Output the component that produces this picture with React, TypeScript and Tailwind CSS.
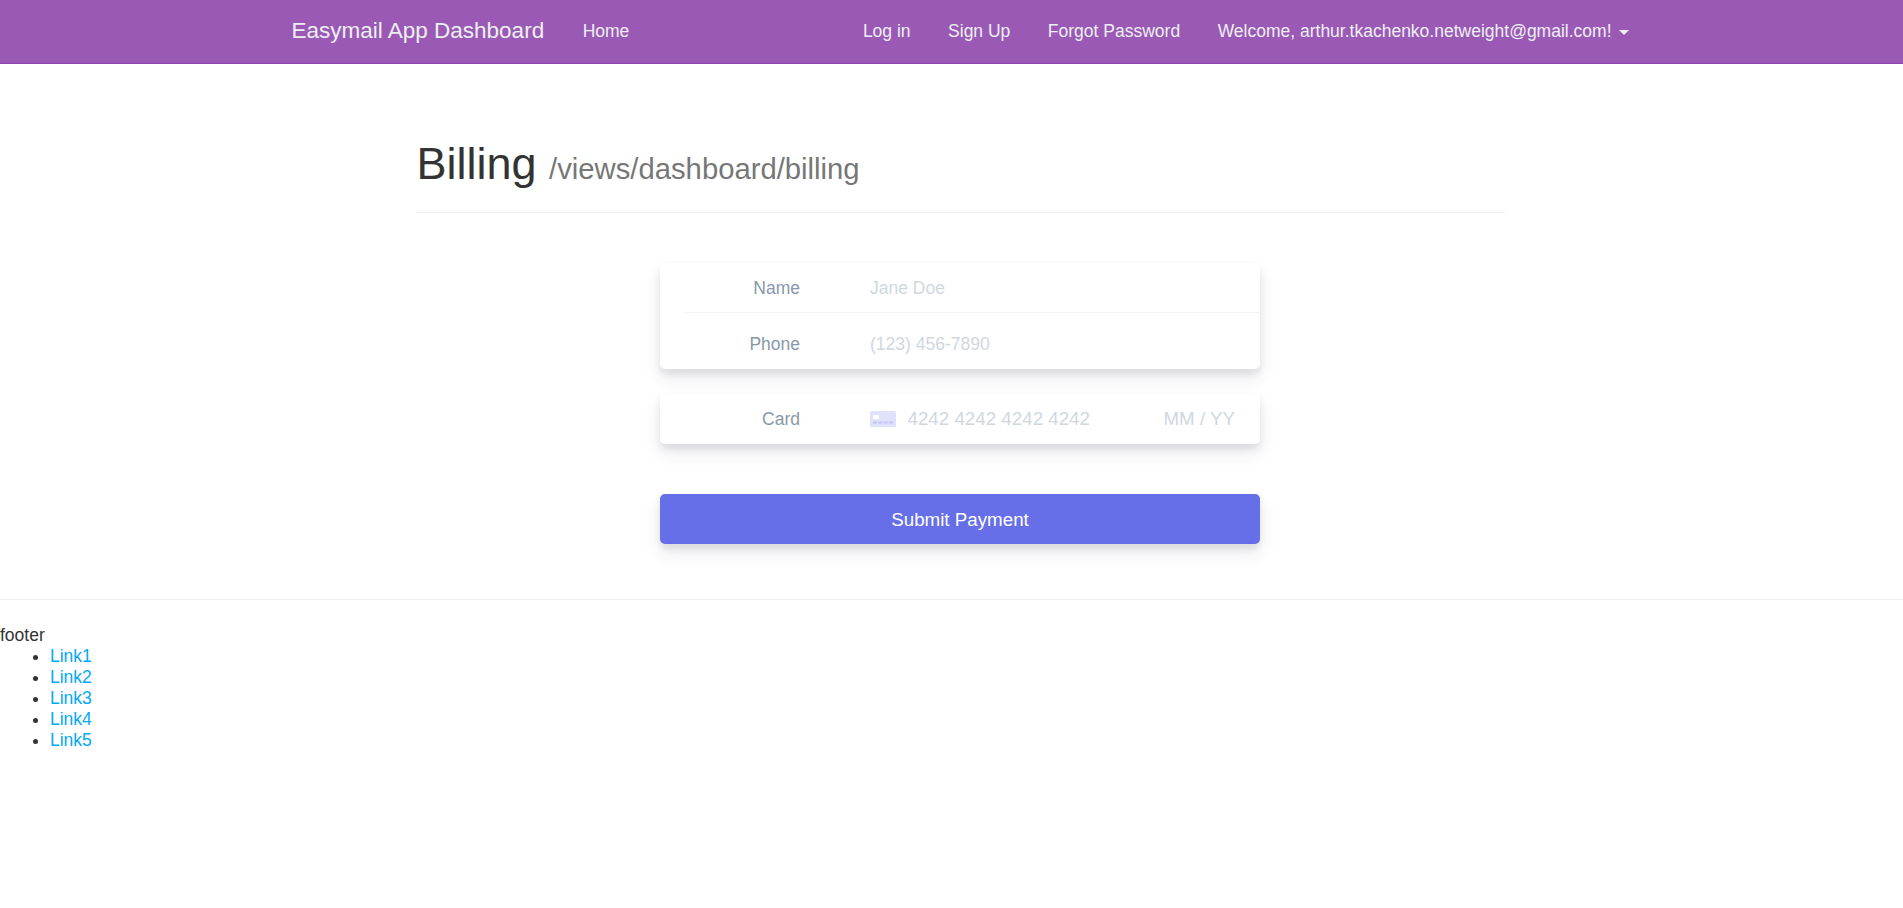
import type { ReactNode } from 'react';

const links = ['Link1', 'Link2', 'Link3', 'Link4', 'Link5'];
const groupShadow = 'rounded-[5px] bg-white shadow-[0_9px_17px_0_rgba(49,49,93,0.10),0_5px_7px_0_rgba(0,0,0,0.08)]';

function Label({ children }: { children: ReactNode }) {
  return <label className="w-[115px] text-right text-[#8898aa]">{children}</label>;
}

function CardIcon() {
  return (
    <svg className="mr-[11.5px] h-4 w-[26px]" viewBox="0 0 26 16">
      <rect width="26" height="16" rx="1.5" fill="#e0e2fb" />
      <rect x="3" y="4" width="6" height="4" rx="0.5" fill="#fff" />
      <path d="M3 11.5h4M8.3 11.5h4M13.6 11.5h4M18.9 11.5h4.4" stroke="#c4c1f7" strokeWidth="1.8" />
    </svg>
  );
}

export default function App() {
  return (
    <div className="min-h-[908px] bg-white font-['Liberation_Sans',Arial,sans-serif] text-[17.5px] leading-[21px] text-[#333]">
      <nav className="flex h-16 items-center border-b border-[#8e44ad] bg-[#9b59b6] pr-[274px] pb-0.5 pl-[291.5px] text-[#ecf0f1]">
        <a className="text-[22.5px] leading-6">Easymail App Dashboard</a>
        <a className="ml-[38.5px] pt-0.5">Home</a>
        <div className="ml-auto flex gap-[37.5px] pt-0.5">
          <a>Log in</a>
          <a>Sign Up</a>
          <a>Forgot Password</a>
          <a className="flex items-center">
            Welcome, arthur.tkachenko.netweight@gmail.com!
            <svg className="mt-0.5 ml-[7.5px] h-[5px] w-2.5" viewBox="0 0 10 5">
              <path d="M0 0h10L5 5z" fill="currentColor" />
            </svg>
          </a>
        </div>
      </nav>
      <main>
        <header className="mt-[76px] ml-[416px] h-[73px] w-[1089px] border-b border-[#eee]">
          <h1 className="pl-[0.5px] text-[45px] leading-[48px]">
            Billing <small className="text-[29.25px] text-[#777]">/views/dashboard/billing</small>
          </h1>
        </header>
        <form className="mt-[50px] ml-[660px] w-[600px]">
          <div className={groupShadow + ' h-[106px] pl-[25px]'}>
            <div className="flex h-[50px] items-center border-b border-[#f0f5fa] pt-0.5">
              <Label>Name</Label>
              <span className="ml-[70px] text-[#cfd7df]">Jane Doe</span>
            </div>
            <div className="flex h-14 items-center pt-1.5">
              <Label>Phone</Label>
              <span className="ml-[70px] text-[#cfd7df]">(123) 456-7890</span>
            </div>
          </div>
          <div className={groupShadow + ' mt-[25px] flex h-[50px] items-center pr-[25px] pl-[25px]'}>
            <Label>Card</Label>
            <div className="ml-[70px] flex grow items-center text-[18.75px] text-[#cfd7df]">
              <CardIcon />
              <span className="pb-0.5">4242 4242 4242 4242</span>
              <span className="ml-auto pb-0.5">MM / YY</span>
            </div>
          </div>
          <button type="button" className="mt-[50px] block h-[50px] w-full rounded-[5px] bg-[#666ee8] text-[18.75px] text-white shadow-[0_9px_17px_0_rgba(49,49,93,0.10),0_5px_7px_0_rgba(0,0,0,0.08)]">
            Submit Payment
          </button>
        </form>
      </main>
      <footer className="mt-[55px] border-t border-[#eee] pt-[25px]">
        <p>footer</p>
        <ul className="list-disc pl-[50px]">
          {links.map((l) => (
            <li key={l}>
              <a className="text-[#03a9f4]">{l}</a>
            </li>
          ))}
        </ul>
      </footer>
    </div>
  );
}
